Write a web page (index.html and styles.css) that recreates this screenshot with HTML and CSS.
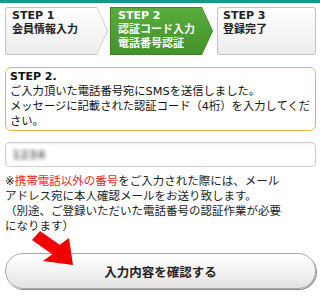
FILE: index.html
```html
<!DOCTYPE html>
<html lang="ja">
<head>
  <meta charset="UTF-8" />
  <meta name="viewport" content="width=device-width, initial-scale=1.0" />
  <title>認証コード入力</title>
  <link rel="stylesheet" href="styles.css">
</head>
<body>
  <div class="page">
    <div class="steps">
      <div class="step step-first">
        <div class="step-body"><b>STEP 1</b><br>会員情報入力</div>
      </div>
      <div class="step step-current">
        <div class="step-body"><b>STEP 2</b><br>認証コード入力<br>電話番号認証</div>
      </div>
      <div class="step step-last">
        <div class="step-body"><b>STEP 3</b><br>登録完了</div>
      </div>
    </div>

    <div class="notice">
      <strong>STEP 2.</strong><br>
      ご入力頂いた電話番号宛にSMSを送信しました。<br>
      メッセージに記載された認証コード（4桁）を入力してください。
    </div>

    <input class="code-input" type="tel" value="1234">

    <p class="note">※<span class="warn">携帯電話以外の番号</span>をご入力された際には、メール<br>アドレス宛に本人確認メールをお送り致します。<br>（別途、ご登録いただいた電話番号の認証作業が必要<br>になります）</p>

    <button class="confirm" type="button">入力内容を確認する</button>

    <!-- red pointer drawn over the note / button -->
    <svg class="pointer" width="320" height="300" viewBox="0 0 320 300">
      <polygon points="40,231 59.7,244.8 69,238 73,265 43,261 52.3,254.2 32,240" fill="#f50000"/>
    </svg>
  </div>
</body>
</html>
```

FILE: styles.css
```css
body {
  margin: 0;
  background: #fff;
  color: #1a1a1a;
  font-family: "DejaVu Sans", "Noto Sans CJK JP", sans-serif;
}
.page {
  position: relative;
  width: 320px;
  height: 300px;
  box-sizing: border-box;
  padding: 0 4px 0 5px;
  border-top: 3px solid #16998a;
  overflow: hidden;
}
.steps {
  display: flex;
  margin-top: 4px;
  height: 48px;
}
.step {
  box-sizing: border-box;
  padding: 1px;
  background: #c4c4c4;
  border-radius: 3px 0 0 3px;
}
.step-body {
  height: 100%;
  box-sizing: border-box;
  padding: 1px 0 0 6px;
  font-size: 11px;
  line-height: 14px;
  background: linear-gradient(#ffffff, #ececec);
  color: #222;
  font-weight: bold;
  border-radius: 2px 0 0 2px;
}
.step-first,
.step-current {
  width: 103px;
  flex: none;
  clip-path: polygon(0 0, 92px 0, 100% 50%, 92px 100%, 0 100%);
}
.step-first .step-body,
.step-current .step-body {
  clip-path: polygon(0 0, 91px 0, 100% 50%, 91px 100%, 0 100%);
}
.step-first {
  margin-right: 2px;
}
.step-current {
  background: #3b8424;
  margin-right: 4px;
  border-radius: 0;
}
.step-current .step-body {
  background: linear-gradient(#5aad3c, #43922b);
  color: #fff;
  padding-left: 7px;
  border-radius: 0;
}
.step-last {
  flex: 1;
  border-radius: 3px;
}
.step-last .step-body {
  border-radius: 2px;
  padding-left: 5px;
}
.notice {
  margin-top: 12px;
  border: 1.5px solid #f3b34a;
  border-radius: 6px;
  padding: 1px 2px 1px 4px;
  font-size: 11.3px;
  line-height: 15px;
  color: #111;
}
.notice strong {
  font-size: 11px;
}
.code-input {
  display: block;
  width: 100%;
  box-sizing: border-box;
  height: 25px;
  margin-top: 11px;
  padding: 0 6px;
  border: 1px solid #cfcfcf;
  border-radius: 4px;
  box-shadow: inset 0 1px 2px rgba(0, 0, 0, 0.08);
  font-family: "DejaVu Sans", sans-serif;
  font-size: 12px;
  font-weight: bold;
  color: transparent;
  text-shadow: 0 0 4px #6f6f6f;
}
.note {
  margin: 7px 0 0;
  font-size: 11.5px;
  line-height: 15px;
  color: #222;
}
.warn {
  color: #f01e1e;
}
.confirm {
  display: block;
  width: 100%;
  height: 36px;
  margin-top: 19px;
  border: 1px solid #a9a9a9;
  border-radius: 18px;
  background: linear-gradient(#ffffff, #f3f3f3 50%, #e2e2e2);
  box-shadow: 1px 1px 0 #8d8d8d;
  font-family: "Noto Sans CJK JP", sans-serif;
  font-size: 12.5px;
  font-weight: bold;
  color: #222;
}
.pointer {
  position: absolute;
  left: 0;
  top: -3px;
  pointer-events: none;
}
```
